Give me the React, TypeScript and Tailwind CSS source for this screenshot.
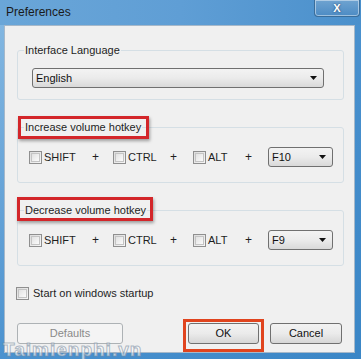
import React from "react"

const font = { fontFamily: '"Liberation Sans", Arial, sans-serif' }

function Check({ label, className = "" }: { label: string; className?: string }) {
  return (
    <div className={`flex items-center ${className}`}>
      <div className="w-[13px] h-[13px] border border-[#8f8f8f] bg-gradient-to-br from-[#dcdcdc] to-[#f6f6f6] p-[1px]">
        <div className="w-full h-full border border-[#c4c4c4] bg-gradient-to-br from-[#e2e2e2] to-[#fbfbfb]" />
      </div>
      <span className="ml-[2px] text-[11px] leading-[14px] text-[#1e1e1e]">{label}</span>
    </div>
  )
}

function Arrow() {
  return (
    <svg width="7" height="4" viewBox="0 0 7 4" className="shrink-0">
      <path d="M0 0h7L3.5 4z" fill="#111" />
    </svg>
  )
}

function Select({ value, className = "" }: { value: string; className?: string }) {
  return (
    <div
      className={`h-[20px] flex items-center justify-between pl-[3px] pr-[6px] rounded-[3px] border border-[#707070] bg-gradient-to-b from-[#f3f3f3] via-[#ebebeb] to-[#d9d9d9] text-[11px] text-[#111] ${className}`}
    >
      <span>{value}</span>
      <Arrow />
    </div>
  )
}

function Group({ title, children }: { title: string; children: React.ReactNode }) {
  return (
    <fieldset className="border border-[#d5dfe5] rounded-[3px]">
      <legend className="ml-[6px] px-[1px] text-[11px] leading-[14px] text-[#1e1e1e]">{title}</legend>
      <div className="pl-[11px]">{children}</div>
    </fieldset>
  )
}

function Plus({ className }: { className: string }) {
  return <span className={`text-[12px] leading-[14px] text-[#1e1e1e] ${className}`}>+</span>
}

function HotkeyRow({ keyName }: { keyName: string }) {
  return (
    <div className="flex items-center mt-[13px] mb-[15px]">
      <Check label="SHIFT" className="w-[63px]" />
      <Plus className="w-[21px]" />
      <Check label="CTRL" className="w-[57px]" />
      <Plus className="w-[23px]" />
      <Check label="ALT" className="w-[52px]" />
      <Plus className="w-[23px]" />
      <Select value={keyName} className="w-[65px]" />
    </div>
  )
}

function Button({ label, className = "", disabled = false }: { label: string; className?: string; disabled?: boolean }) {
  return (
    <div
      className={`h-[21px] flex items-center justify-center rounded-[3px] border text-[11px] ${
        disabled
          ? "border-[#adb2b5] bg-[#f4f4f4] text-[#8a8a8a]"
          : "border-[#707070] bg-gradient-to-b from-[#f2f2f2] via-[#ebebeb] to-[#d6d6d6] text-[#111]"
      } ${className}`}
    >
      {label}
    </div>
  )
}

export default function App() {
  return (
    <div
      style={font}
      className="relative w-[361px] h-[359px] overflow-hidden bg-gradient-to-br from-[#86b9e2] via-[#4b92cf] to-[#3a86c6]"
    >
      {/* Title bar */}
      <div className="h-[25px] flex justify-between items-start bg-gradient-to-r from-[#6aa6d8] via-[#5f9ed5] to-[#4a90cc]">
        <span className="pl-[6px] pt-[4px] text-[12px] leading-[16px] text-[#1a1a1a]">Preferences</span>
        <div className="mr-[1px] w-[46px] h-[17px] rounded-b-[4px] border border-t-0 border-[#3a6d9a] bg-gradient-to-b from-[#6fa3d0] to-[#4c8bc4] shadow-[inset_0_0_0_1px_rgba(255,255,255,0.45)] flex items-center justify-center">
          <span className="text-[11px] leading-[11px] font-bold text-white [text-shadow:0_0_2px_#1c3d5e]">X</span>
        </div>
      </div>

      {/* Client area */}
      <div className="ml-[4px] w-[351px] h-[328px] border border-[#a6b8c9] bg-[#f0f0f0] pl-[12px] pr-[10px]">
        <div className="mt-[17px]">
          <Group title="Interface Language">
            <Select value="English" className="mt-[11px] mb-[11px] ml-[3px] w-[292px]" />
          </Group>
        </div>

        <div className="mt-[20px]">
          <Group title="Increase volume hotkey">
            <HotkeyRow keyName="F10" />
          </Group>
        </div>

        <div className="mt-[20px]">
          <Group title="Decrease volume hotkey">
            <HotkeyRow keyName="F9" />
          </Group>
        </div>

        <Check label="Start on windows startup" className="mt-[20px] -ml-[1px] [&>span]:ml-[4px]" />

        <div className="flex mt-[23px]">
          <Button label="Defaults" disabled className="w-[106px]" />
          <Button label="OK" className="ml-[65px] w-[71px]" />
          <Button label="Cancel" className="ml-[11px] w-[72px]" />
        </div>
      </div>

      {/* Annotation boxes */}
      <div className="absolute left-[18px] top-[116px] w-[131px] h-[23px] border-[3px] border-[#d3262a] shadow-[1px_2px_3px_rgba(0,0,0,0.35)]" />
      <div className="absolute left-[17px] top-[197px] w-[136px] h-[24px] border-[3px] border-[#d3262a] shadow-[1px_2px_3px_rgba(0,0,0,0.35)]" />
      <div className="absolute left-[183px] top-[319px] w-[81px] h-[33px] border-[3px] border-[#e0441e]" />

      {/* Watermark */}
      <span className="absolute left-[3px] top-[340px] text-[19px] leading-[19px] font-bold tracking-[1px] text-white/60 [-webkit-text-stroke:1px_rgba(120,140,160,0.6)]">
        Taimienphi.vn
      </span>
    </div>
  )
}
